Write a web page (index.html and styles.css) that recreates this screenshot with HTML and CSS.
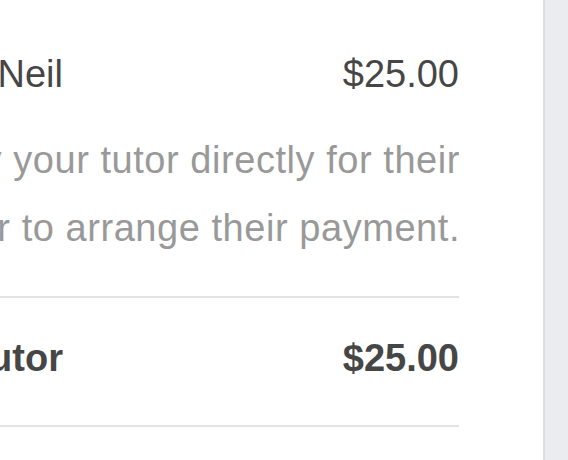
FILE: index.html
```html
<!DOCTYPE html>
<html lang="en">
<head>
  <meta charset="UTF-8">
  <meta name="viewport" content="width=device-width, initial-scale=1.0">
  <title>Payment Summary</title>
  <link rel="stylesheet" href="styles.css">
</head>
<body>
  <div class="page">
    <main class="content">
      <div class="summary">
        <div class="row">
          <span class="label">Lesson with Neil</span>
          <span class="amount">$25.00</span>
        </div>
        <p class="note">Please pay your tutor directly for their<br>lesson. Contact your tutor to arrange their payment.</p>
        <div class="row total">
          <span class="label">Total to pay your tutor</span>
          <span class="amount">$25.00</span>
        </div>
      </div>
    </main>
    <aside class="sidebar"></aside>
  </div>
</body>
</html>
```
FILE: styles.css
```css
body {
  margin: 0;
  font-family: "Liberation Sans", Arial, sans-serif;
  color: #464646;
}

.page {
  display: flex;
  height: 100vh;
  overflow: hidden;
}

.content {
  flex: 1;
  background-color: #fff;
  padding: 52px 84px 0 0;
  overflow: hidden;
}

.sidebar {
  width: 23px;
  border-left: 2px solid #dedede;
  background-color: #ebecf0;
}

/* summary is wider than the visible column, left part runs off screen */
.summary {
  margin-left: -640px;
}

.row {
  display: flex;
  justify-content: space-between;
  font-size: 38px;
  line-height: 44px;
}

.label {
  width: 703px;
  text-align: right;
  white-space: nowrap;
}

.note {
  margin: 30px -1px 34px 0;
  font-size: 38px;
  line-height: 68px;
  letter-spacing: 0.55px;
  color: #999;
  text-align: right;
  white-space: nowrap;
}

.total {
  font-weight: bold;
  padding: 38px 0 45px;
  border-top: 2px solid #e3e3e3;
  border-bottom: 2px solid #e3e3e3;
}
```
